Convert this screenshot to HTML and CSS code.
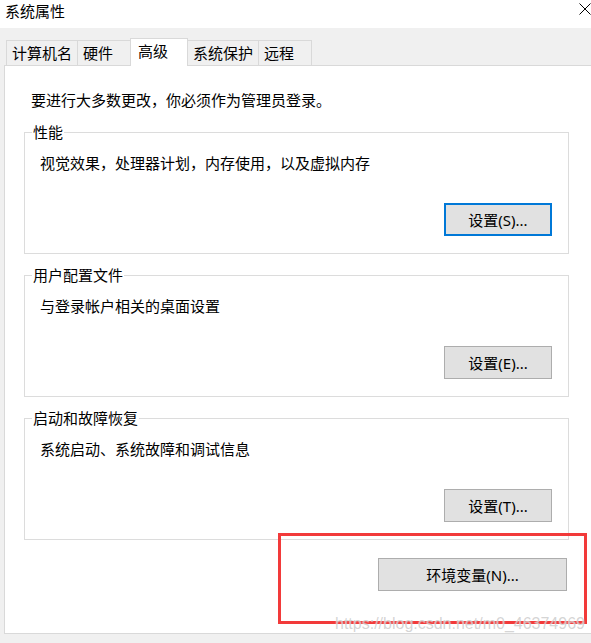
FILE: index.html
```html
<!DOCTYPE html>
<html lang="zh-CN">
<head>
  <meta charset="UTF-8">
  <meta name="viewport" content="width=device-width, initial-scale=1.0">
  <title>系统属性</title>
  <link rel="stylesheet" href="styles.css">
</head>
<body>
  <div class="titlebar">
    <span class="title">系统属性</span>
    <button class="close" aria-label="关闭">
      <svg width="12" height="12" viewBox="0 0 12 12"><path d="M0.5 0.5 L11.5 11.5 M11.5 0.5 L0.5 11.5" stroke="#000" stroke-width="1" fill="none"/></svg>
    </button>
  </div>

  <div class="tabs">
    <div class="tab">计算机名</div>
    <div class="tab">硬件</div>
    <div class="tab active">高级</div>
    <div class="tab">系统保护</div>
    <div class="tab">远程</div>
  </div>

  <div class="panel">
    <p class="intro">要进行大多数更改，你必须作为管理员登录。</p>

    <fieldset class="group">
      <legend>性能</legend>
      <p>视觉效果，处理器计划，内存使用，以及虚拟内存</p>
      <div class="actions"><button class="btn focus">设置(S)...</button></div>
    </fieldset>

    <fieldset class="group">
      <legend>用户配置文件</legend>
      <p>与登录帐户相关的桌面设置</p>
      <div class="actions"><button class="btn">设置(E)...</button></div>
    </fieldset>

    <fieldset class="group">
      <legend>启动和故障恢复</legend>
      <p>系统启动、系统故障和调试信息</p>
      <div class="actions"><button class="btn">设置(T)...</button></div>
    </fieldset>

    <div class="footer">
      <button class="btn btn-wide">环境变量(N)...</button>
    </div>
  </div>

  <!-- annotation layer from the original screenshot -->
  <div class="highlight"></div>
  <div class="watermark">https://blog.csdn.net/m0_46374969</div>
</body>
</html>
```

FILE: styles.css
```css
:root {
  --window-bg: #f0f0f0;
  --tab-border: #d9d9d9;
  --group-border: #dcdcdc;
  --button-bg: #e1e1e1;
  --button-border: #adadad;
  --focus-color: #0078d7;
}

* {
  box-sizing: border-box;
}

body {
  margin: 0;
  height: 643px;
  overflow: hidden;
  background-color: var(--window-bg);
  font-family: "Noto Sans", "Noto Sans CJK SC", sans-serif;
  font-size: 15px;
  color: #000;
  position: relative;
}

.titlebar {
  height: 28px;
  background-color: #fff;
  display: flex;
  justify-content: space-between;
  align-items: flex-start;
}

.title {
  padding-left: 5px;
  line-height: 22px;
}

.close {
  display: block;
  width: 12px;
  height: 12px;
  margin-top: 3px;
  padding: 0;
  border: 0;
  background: none;
}

.close svg {
  display: block;
}

.tabs {
  display: flex;
  align-items: flex-end;
  height: 27px;
  margin-top: 10px;
  padding-left: 6px;
}

.tab {
  height: 25px;
  min-width: 54px;
  padding: 0 5px;
  margin-left: -1px;
  border: 1px solid var(--tab-border);
  border-bottom: 0;
  line-height: 24px;
  white-space: nowrap;
  background-color: var(--window-bg);
}

.tab:first-child {
  margin-left: 0;
}

.tab.active {
  height: 28px;
  min-width: 58px;
  padding-left: 7px;
  margin-bottom: -1px;
  background-color: #fff;
  position: relative;
  z-index: 1;
}

.panel {
  height: 569px;
  margin: 0 -20px 0 4px;
  padding: 24px 0 0 19px;
  background-color: #fff;
  border: 1px solid var(--tab-border);
}

.intro {
  margin: 0;
  padding-left: 7px;
  line-height: 20px;
}

.group {
  width: 545px;
  min-width: 0;
  margin: 12px 0 0;
  padding: 11px 16px 17px 15px;
  border: 1px solid var(--group-border);
}

.group + .group {
  margin-top: 11px;
}

.group legend {
  margin-left: -8px;
  padding: 0 1px;
  line-height: 20px;
}

.group p {
  margin: 0;
  line-height: 20px;
}

.actions {
  display: flex;
  justify-content: flex-end;
  margin-top: 30px;
}

.btn {
  width: 108px;
  height: 33px;
  padding: 0;
  background-color: var(--button-bg);
  border: 1px solid var(--button-border);
  font: inherit;
  color: #000;
}

.btn.focus {
  border: 2px solid var(--focus-color);
}

.footer {
  width: 545px;
  display: flex;
  justify-content: flex-end;
  padding-right: 2px;
  margin-top: 18px;
}

.btn-wide {
  width: 189px;
}

.highlight {
  position: absolute;
  left: 278px;
  top: 533px;
  width: 309px;
  height: 91px;
  border: 3px solid #f23a3a;
}

.watermark {
  position: absolute;
  left: 335px;
  top: 615px;
  font-family: "Liberation Sans", Arial, sans-serif;
  font-size: 16px;
  line-height: 18px;
  color: rgba(160, 160, 160, 0.45);
  text-shadow: 0 0 1px rgba(255, 255, 255, 0.9);
  white-space: nowrap;
}
```
